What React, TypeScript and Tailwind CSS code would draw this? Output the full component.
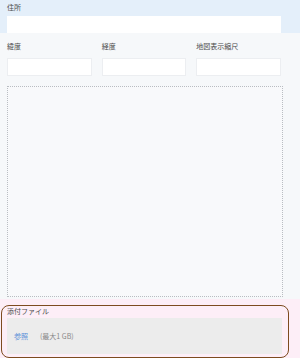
import React from 'react';

const font = { fontFamily: '"Noto Sans CJK JP", "Noto Sans", sans-serif' };

function Field({ label }: { label: string }) {
    return (
        <div className="flex flex-col">
            <span className="text-[7px] leading-[9px] text-[#4a4a4a]">{label}</span>
            <div className="mt-[7px] h-[18px] bg-white border border-[#eceef1]" />
        </div>
    );
}

export default function App() {
    return (
        <div className="w-[300px] h-[358px] bg-[#f6f8fa] flex flex-col overflow-hidden" style={font}>
            {/* 住所 */}
            <div className="h-[35px] bg-[#e4effa] px-[7px] pt-[3px] flex flex-col">
                <span className="text-[7px] leading-[9px] text-[#4a4a4a]">住所</span>
                <div className="mt-[4px] w-[274px] h-[17px] bg-white" />
            </div>

            {/* 緯度・経度・縮尺 */}
            <div className="px-[7px] pt-[9px]">
                <div className="w-[274px] grid grid-cols-3 gap-x-[10px]">
                    <Field label="緯度" />
                    <Field label="経度" />
                    <Field label="地図表示縮尺" />
                </div>
                <div className="mt-[10px] w-[276px] h-[211px] border border-dotted border-[#b9bdc2] bg-[#f8f9fb]" />
            </div>

            {/* 添付ファイル */}
            <div className="mt-[2px] flex-1 bg-[#fdeef7] pt-[6px] pl-[1px]">
                <div className="w-[288px] h-[53px] rounded-[8px] border-[1.5px] border-[#7d4b1f] px-[5px] pt-[1px] flex flex-col">
                    <span className="text-[7px] leading-[9px] text-[#4a4a4a]">添付ファイル</span>
                    <div className="mt-[2px] w-[275px] h-[36px] bg-[#ececec] flex items-center pl-[7px] gap-[12px]">
                        <span className="text-[7px] text-[#5a8fd8]">参照</span>
                        <span className="text-[7px] text-[#888]">(最大1 GB)</span>
                    </div>
                </div>
            </div>
        </div>
    );
}
